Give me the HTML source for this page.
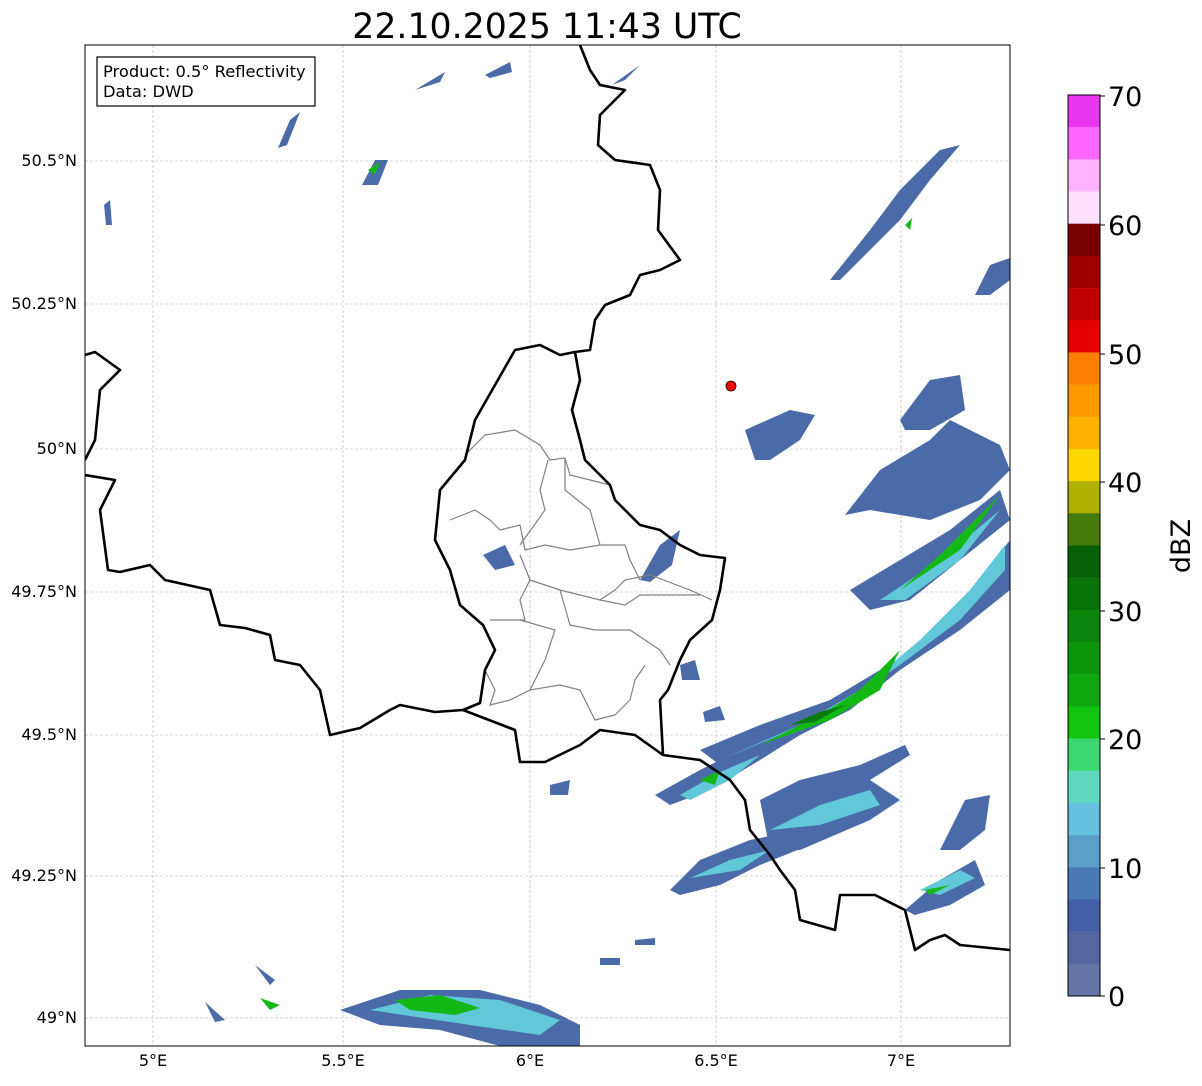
<!DOCTYPE html>
<html><head><meta charset="utf-8"><style>
body{margin:0;background:#fff;width:1202px;height:1081px;overflow:hidden;font-family:"Liberation Sans","DejaVu Sans",sans-serif}
</style></head><body>
<svg width="1202" height="1081" xmlns="http://www.w3.org/2000/svg" font-family="DejaVu Sans, Liberation Sans, sans-serif">
<rect width="1202" height="1081" fill="#fff"/>
<text x="547" y="38" font-size="34.7" text-anchor="middle">22.10.2025 11:43 UTC</text>
<defs><clipPath id="c"><rect x="85" y="45" width="925" height="1001"/></clipPath></defs>
<g clip-path="url(#c)">
<g stroke="#b0b0b0" stroke-width="0.6" stroke-dasharray="3,2" fill="none">
<path d="M153 45V1046M343 45V1046M530 45V1046M716 45V1046M901 45V1046"/>
<path d="M85 161H1010M85 304H1010M85 449H1010M85 592H1010M85 735H1010M85 876H1010M85 1018H1010"/>
</g>
<g fill="#4a6aa8">
<path d="M700 750L760 725L830 700L880 670L930 640L980 580L1010 540L1010 590L960 630L900 670L850 710L790 740L720 765Z"/>
<path d="M655 795L700 770L760 740L800 735L760 760L710 790L670 805Z"/>
<path d="M760 800L800 780L860 765L905 745L910 755L870 780L900 800L870 820L800 850L770 850Z"/>
<path d="M670 890L700 860L750 840L800 830L810 845L760 865L720 885L680 895Z"/>
<path d="M850 590L900 560L950 530L1000 490L1010 520L960 560L910 600L870 610Z"/>
<path d="M845 515L880 470L930 440L950 420L1000 445L1010 470L980 500L930 520L870 510Z"/>
<path d="M900 420L930 380L960 375L965 410L930 430L905 430Z"/>
<path d="M745 430L790 410L815 415L800 440L770 460L755 460Z"/>
<path d="M830 280L870 230L900 190L940 150L960 145L930 180L900 220L860 260L840 280Z"/>
<path d="M975 295L990 265L1010 258L1010 280L990 295Z"/>
<path d="M905 910L940 880L975 860L985 885L950 905L915 915Z"/>
<path d="M940 850L965 800L990 795L985 830L960 850Z"/>
<path d="M340 1010L400 990L480 990L540 1005L580 1025L580 1046L500 1046L440 1030L380 1025Z"/>
<path d="M640 580L660 545L680 530L672 565L650 582Z"/>
<path d="M483 555L505 545L515 565L495 570Z"/>
<path d="M612 85L640 65L650 55L625 80Z"/>
<path d="M485 75L510 62L512 72L490 78Z"/>
<path d="M415 90L445 72L440 82Z"/>
<path d="M362 185L375 160L388 160L378 185Z"/>
<path d="M278 148L290 120L300 112L287 145Z"/>
<path d="M205 1002L225 1020L215 1022Z"/>
<path d="M255 965L275 980L270 985Z"/>
<path d="M680 665L695 660L700 680L682 680Z"/>
<path d="M703 712L720 706L725 720L705 722Z"/>
<path d="M550 785L570 780L568 795L550 795Z"/>
<path d="M635 940L655 938L655 945L635 945Z"/>
<path d="M600 958L620 958L620 965L600 965Z"/>
<path d="M104 205L110 200L112 225L106 225Z"/>
</g>
<g fill="#60c8d8">
<path d="M720 760L800 725L860 690L920 640L970 590L1005 545L1005 570L960 620L900 665L840 705L780 735Z"/>
<path d="M680 795L720 772L760 755L730 780L690 800Z"/>
<path d="M770 830L820 805L870 790L880 805L820 825Z"/>
<path d="M690 878L730 860L770 850L740 870Z"/>
<path d="M880 600L940 560L1000 510L960 560L905 600Z"/>
<path d="M370 1010L430 995L500 1000L560 1020L540 1035L470 1025Z"/>
<path d="M920 890L960 870L975 878L940 895Z"/>
</g>
<g fill="#14b814">
<path d="M760 745L820 715L860 690L900 650L880 690L830 720Z"/>
<path d="M900 590L940 555L975 520L1000 495L960 550Z"/>
<path d="M395 1000L440 995L480 1008L455 1015L410 1010Z"/>
<path d="M700 780L720 770L715 785Z"/>
<path d="M260 998L280 1005L270 1010Z"/>
<path d="M925 890L950 885L930 895Z"/>
<path d="M368 170L380 162L375 175Z"/>
<path d="M905 225L912 218L910 230Z"/>
</g>
<g fill="#0a7a0a"><path d="M790 725L820 712L845 705L815 722Z"/></g>
<circle cx="731" cy="386" r="5" fill="#f00" stroke="#000" stroke-width="0.8"/>
<g fill="none" stroke="#808080" stroke-width="1.2">
<path d="M465 455L485 435L515 430L540 445L550 460L565 458L570 475L590 480L610 485"/>
<path d="M450 520L475 510L490 520L500 530L520 525L525 550L545 545L570 550L600 545L625 545L630 560L640 580"/>
<path d="M548 460L540 490L545 510L520 545M565 458L565 490L590 510L600 545"/>
<path d="M520 555L530 580L520 600L525 620L490 620M530 580L560 590L600 600L615 590L625 580L650 575L690 590L712 600"/>
<path d="M560 590L570 625L595 630L630 630L660 650L670 665"/>
<path d="M520 620L555 630L545 660L530 690L560 685L580 690L595 720L615 715L630 700L635 680L645 665"/>
<path d="M485 670L495 690L490 705L510 700L530 690"/>
<path d="M600 600L625 605L640 595L700 595"/>
</g>
<g fill="none" stroke="#000" stroke-width="2.6" stroke-linejoin="round">
<path d="M85 475L115 480L100 510L108 570L120 572L150 565L165 580L210 590L220 625L245 628L270 635L275 660L300 665L320 690L330 735L360 728L390 710L400 705L435 712L463 710L480 703L485 670L495 650L483 625L460 605L450 570L435 540L440 490L465 460L475 420L495 385L515 350L540 345L560 355L575 352"/>
<path d="M463 710L515 730L520 762L545 762L580 745L600 730L635 735L663 755L700 760L730 780L745 800L750 830L770 855L780 870L795 890L800 920L835 930L840 895L875 895L905 910L915 950L930 940L945 935L960 945L1010 950"/>
<path d="M663 755L660 700L668 690L680 660L690 640L712 620L720 590L725 558L700 555L680 545L660 530L640 525L615 500L610 485L585 460L580 440L572 410L580 380L575 352L590 350L595 320L605 305L630 295L640 275L660 270L680 260L658 230L660 190L650 165L615 160L598 145L600 115L625 90L600 85L590 70L580 45"/>
<path d="M85 355L95 352L120 370L100 390L95 440L85 460"/>
</g>
</g>
<rect x="85" y="45" width="925" height="1001" fill="none" stroke="#000" stroke-width="1"/>
<rect x="97" y="57" width="218" height="49" fill="#fff" stroke="#000" stroke-width="1.2"/>
<text x="103" y="77" font-size="16.3">Product: 0.5° Reflectivity</text>
<text x="103" y="97" font-size="16.3">Data: DWD</text>
<g font-size="16" text-anchor="end">
<text x="77" y="166">50.5°N</text><text x="77" y="309">50.25°N</text><text x="77" y="454">50°N</text><text x="77" y="597">49.75°N</text><text x="77" y="740">49.5°N</text><text x="77" y="881">49.25°N</text><text x="77" y="1023">49°N</text>
</g>
<g font-size="16" text-anchor="middle">
<text x="153" y="1066">5°E</text><text x="343" y="1066">5.5°E</text><text x="530" y="1066">6°E</text><text x="716" y="1066">6.5°E</text><text x="901" y="1066">7°E</text>
</g>
<g>
<rect x="1068" y="95.0" width="32" height="32.4" fill="#e836ee"/>
<rect x="1068" y="127.2" width="32" height="32.4" fill="#ff66ff"/>
<rect x="1068" y="159.4" width="32" height="32.4" fill="#ffb3ff"/>
<rect x="1068" y="191.5" width="32" height="32.4" fill="#ffe0ff"/>
<rect x="1068" y="223.7" width="32" height="32.4" fill="#780000"/>
<rect x="1068" y="255.9" width="32" height="32.4" fill="#9e0000"/>
<rect x="1068" y="288.1" width="32" height="32.4" fill="#c00000"/>
<rect x="1068" y="320.3" width="32" height="32.4" fill="#e40000"/>
<rect x="1068" y="352.4" width="32" height="32.4" fill="#ff7f00"/>
<rect x="1068" y="384.6" width="32" height="32.4" fill="#ff9900"/>
<rect x="1068" y="416.8" width="32" height="32.4" fill="#ffb300"/>
<rect x="1068" y="449.0" width="32" height="32.4" fill="#ffd700"/>
<rect x="1068" y="481.1" width="32" height="32.4" fill="#b0b000"/>
<rect x="1068" y="513.3" width="32" height="32.4" fill="#467a0a"/>
<rect x="1068" y="545.5" width="32" height="32.4" fill="#066006"/>
<rect x="1068" y="577.7" width="32" height="32.4" fill="#087308"/>
<rect x="1068" y="609.9" width="32" height="32.4" fill="#0a840a"/>
<rect x="1068" y="642.0" width="32" height="32.4" fill="#0a960a"/>
<rect x="1068" y="674.2" width="32" height="32.4" fill="#0ea80e"/>
<rect x="1068" y="706.4" width="32" height="32.4" fill="#10c410"/>
<rect x="1068" y="738.6" width="32" height="32.4" fill="#3cd770"/>
<rect x="1068" y="770.7" width="32" height="32.4" fill="#60d8c0"/>
<rect x="1068" y="802.9" width="32" height="32.4" fill="#66c0e0"/>
<rect x="1068" y="835.1" width="32" height="32.4" fill="#5a9fc8"/>
<rect x="1068" y="867.3" width="32" height="32.4" fill="#4a7ab4"/>
<rect x="1068" y="899.5" width="32" height="32.4" fill="#4460a8"/>
<rect x="1068" y="931.6" width="32" height="32.4" fill="#5366a0"/>
<rect x="1068" y="963.8" width="32" height="32.2" fill="#6575a8"/>
<rect x="1068" y="95" width="32" height="901" fill="none" stroke="#000" stroke-width="1"/>
<g stroke="#000" stroke-width="1"><path d="M1100 96h5M1100 225h5M1100 354h5M1100 482h5M1100 611h5M1100 739h5M1100 868h5M1100 996h5"/></g>
<g font-size="27">
<text x="1108" y="106">70</text><text x="1108" y="235">60</text><text x="1108" y="364">50</text><text x="1108" y="492">40</text><text x="1108" y="621">30</text><text x="1108" y="749">20</text><text x="1108" y="878">10</text><text x="1108" y="1006">0</text>
</g>
<text transform="translate(1190 546) rotate(-90)" font-size="27" text-anchor="middle">dBZ</text>
</g>
</svg>
</body></html>
